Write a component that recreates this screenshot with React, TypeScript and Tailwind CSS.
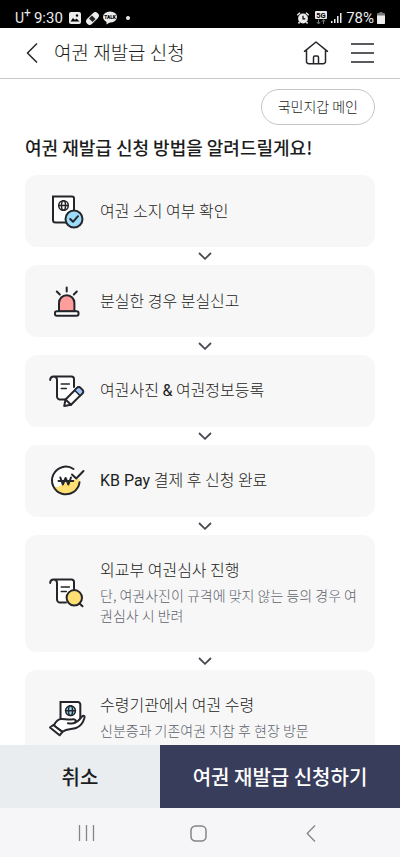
import type { ReactNode } from 'react'

type Step = {
  icon: ReactNode
  title: ReactNode
  desc?: string
}

const ink = '#25262b'

function StepIcon({ children }: { children: ReactNode }) {
  return (
    <svg className="overflow-visible" width="36" height="36" viewBox="0 0 36 36" fill="none" stroke={ink} strokeWidth="2" strokeLinecap="round" strokeLinejoin="round" aria-hidden="true">
      {children}
    </svg>
  )
}

function PassportCheckIcon() {
  return (
    <StepIcon>
      <path d="M4 3.500h19a2 2 0 0 1 2 2v24H6.500A2.500 2.500 0 0 1 4 27z" fill="#fff" strokeLinejoin="miter" />
      <g strokeWidth="1.500">
        <circle cx="14.500" cy="12.500" r="4.800" />
        <ellipse cx="14.500" cy="12.500" rx="2" ry="4.800" />
        <path d="M9.700 12.500h9.600" />
      </g>
      <circle cx="25" cy="26" r="8.500" fill="#9cdcfa" />
      <path d="M21.200 26l2.800 2.800 5-5.600" />
    </StepIcon>
  )
}

function SirenIcon() {
  return (
    <StepIcon>
      <path d="M10 28.500V20a7.700 7.700 0 0 1 15.400 0v8.500z" fill="#ff9d9b" />
      <rect x="6" y="28.200" width="23.500" height="4.600" rx="1.800" fill="#fff" />
      <path d="M17.700 4.500v4M7.800 8.500l3 3M27.800 8.500l-3 3" />
    </StepIcon>
  )
}

function ScrollPaper() {
  return (
    <>
      <path d="M4.500 3.500h18A2.500 2.500 0 0 1 25 6v20.500H11.500a3.500 3.500 0 0 1-3.500-3.500V7a3.500 3.500 0 0 0-3.500-3.500z" fill="#fff" stroke="none" />
      <path d="M1.200 7C1.200 4.500 2.500 3.500 4.500 3.500h18A2.500 2.500 0 0 1 25 6v8M4.500 3.500C6.800 3.500 8 4.800 8 7v16.500a3 3 0 0 0 3 3h6" />
      <path d="M12.300 11h8M12.300 15.500h5" strokeWidth="1.600" />
    </>
  )
}

function PencilPaperIcon() {
  return (
    <StepIcon>
      <ScrollPaper />
      <path d="M16.500 26.500 28 15a2.500 2.500 0 0 1 3.500 0l1.900 1.900a2.500 2.500 0 0 1 0 3.500L22 31.800l-6.800 1.300z" fill="#fff" />
      <path d="M25.700 17.300 28 15a2.500 2.500 0 0 1 3.500 0l1.900 1.900a2.500 2.500 0 0 1 0 3.500l-2.300 2.300z" fill="#9cc4fb" strokeWidth="1.600" />
      <path d="M16.500 26.500l5.500 5.300" />
    </StepIcon>
  )
}

function WonIcon() {
  return (
    <StepIcon>
      <circle cx="16.800" cy="17.500" r="13.800" fill="#fff" stroke="none" />
      <path d="M4.500 23.700C10 25.500 13.500 20.500 18 19s8-2 12.500-3.500C32 23.500 26 31.300 16.800 31.300c-5.300 0-10-3-12.300-7.600z" fill="#ffdf73" stroke="none" />
      <path d="M24.500 6A13.800 13.800 0 1 0 30.500 19.300" />
      <path d="M23 11.500l4.200 4L34.500 8" />
      <path d="M11.300 14.500l2.500 7 2.800-6.500 2.800 6.500 2.600-7M9.500 18h14.800" />
    </StepIcon>
  )
}

function SearchPaperIcon() {
  return (
    <StepIcon>
      <ScrollPaper />
      <circle cx="25.300" cy="21.800" r="7.700" fill="#ffdf73" />
      <path d="M30.500 27.500l3 2.800" />
    </StepIcon>
  )
}

function HandPassportIcon() {
  return (
    <StepIcon>
      <path d="M11.500 1h17.300A2.500 2.500 0 0 1 31.300 3.500V21H11.500z" fill="#fff" strokeLinejoin="miter" />
      <g strokeWidth="1.500">
        <circle cx="21.500" cy="9.700" r="4.900" fill="#9cdcfa" />
        <ellipse cx="21.500" cy="9.700" rx="2" ry="4.900" />
        <path d="M16.600 9.700h9.800" />
      </g>
      <path d="M4.800 24.500C6.500 21 9 18 12.500 18c4 0 6.500.8 11.500.2 2.800-.2 3.300 2 2.200 3.300 3.300-.8 4.800-3.500 7-6.200 1.300-1.300 2.800-.3 2.300 1.500-1.300 4.800-4.300 8.700-8.500 10.200-4.500 1.600-9 .5-13.500 3.800z" fill="#fff" />
      <path d="M26.200 21.500c-1.700 1.500-4.500 1.200-7.200.8" />
      <path d="M1 26.500l3.300-2.500 9 7-2.700 3.300z" fill="#fff" />
    </StepIcon>
  )
}

function Latin({ children }: { children: ReactNode }) {
  return <span className="font-[Roboto,sans-serif] font-normal">{children}</span>
}

const steps: Step[] = [
  { icon: <PassportCheckIcon />, title: '여권 소지 여부 확인' },
  { icon: <SirenIcon />, title: '분실한 경우 분실신고' },
  { icon: <PencilPaperIcon />, title: <>여권사진 <Latin>&amp;</Latin> 여권정보등록</> },
  { icon: <WonIcon />, title: <><Latin>KB Pay</Latin> 결제 후 신청 완료</> },
  {
    icon: <SearchPaperIcon />,
    title: '외교부 여권심사 진행',
    desc: '단, 여권사진이 규격에 맞지 않는 등의 경우 여권심사 시 반려',
  },
  {
    icon: <HandPassportIcon />,
    title: '수령기관에서 여권 수령',
    desc: '신분증과 기존여권 지참 후 현장 방문',
  },
]

function StatusBar() {
  return (
    <div className="flex h-7 shrink-0 items-end justify-between bg-black px-[15px] font-[Roboto,sans-serif] text-[#ececec]">
      <div className="flex h-5 items-center">
        <span className="text-sm leading-5">U<sup className="text-xs">+</sup></span>
        <span className="ml-[3px] text-[15px] leading-5">9:30</span>
        <svg className="ml-1.5" width="12" height="12" viewBox="0 0 12 12">
          <rect width="12" height="12" rx="2" fill="#ececec" />
          <path d="M1.500 9.500l2.500-3.500 2 2 1.500-1.500 3 3z" fill="#000" />
          <circle cx="8" cy="3.500" r="1.200" fill="#000" />
        </svg>
        <svg className="ml-[5px]" width="13" height="13" viewBox="0 0 13 13">
          <rect x="-1" y="3" width="15" height="7" rx="3.500" transform="rotate(-45 6.500 6.500)" fill="#ececec" />
          <path d="M6 3.500l3.500 3.500-3 3L3 6.500z" fill="#222" />
        </svg>
        <svg className="ml-1" width="14" height="14" viewBox="0 0 14 14">
          <ellipse cx="7" cy="6" rx="7" ry="5.600" fill="#ececec" />
          <path d="M3.500 9.500v4l4-2.500z" fill="#ececec" />
          <text x="7" y="7.800" fontSize="4.800" fontWeight="900" textAnchor="middle" fill="#000">TALK</text>
        </svg>
        <span className="ml-[9px] size-1 rounded-full bg-[#ececec]" />
      </div>
      <div className="flex h-5 items-center">
        <svg width="12" height="12" viewBox="0 0 12 12" fill="#ececec">
          <circle cx="6" cy="6.500" r="4.900" />
          <path d="M.3 3.200 3 .7M11.700 3.200 9 .7M2.500 10l-1 1.500M9.500 10l1 1.500" stroke="#ececec" strokeWidth="1.500" />
          <path d="M6 3.800v3h2.300" stroke="#000" strokeWidth="1.200" fill="none" />
        </svg>
        <svg className="ml-[5px]" width="14" height="14" viewBox="0 0 14 14">
          <rect x="1" width="12" height="8" rx="1" fill="#ececec" />
          <text x="7" y="6.800" fontSize="7.500" fontWeight="700" textAnchor="middle" fill="#000">5G</text>
          <path d="M4.500 8.500v4M2.800 11l1.700 2 1.700-2M9.500 13V9M7.800 10.700l1.700-2 1.700 2" stroke="#777" fill="none" />
        </svg>
        <svg className="ml-[3px]" width="11" height="12" viewBox="0 0 11 12" fill="#ececec">
          <rect y="9" width="1.500" height="2" />
          <rect x="3" y="7" width="1.500" height="4" />
          <rect x="6" y="4" width="1.500" height="7" />
          <rect x="9" y="1" width="1.500" height="10" />
        </svg>
        <span className="ml-1 text-[15px] leading-5">78%</span>
        <svg className="ml-[3px]" width="8" height="12" viewBox="0 0 8 12">
          <path d="M2.500 0h3v1H7a1 1 0 0 1 1 1v9a1 1 0 0 1-1 1H1a1 1 0 0 1-1-1V2a1 1 0 0 1 1-1h1.500z" fill="#777" />
          <path d="M0 3.500h8V11a1 1 0 0 1-1 1H1a1 1 0 0 1-1-1z" fill="#ececec" />
        </svg>
      </div>
    </div>
  )
}

function Header() {
  return (
    <header className="flex h-[51px] shrink-0 items-center border-b border-[#c9c9c9] px-[26px]">
      <button type="button" aria-label="뒤로">
        <svg width="12" height="20" viewBox="0 0 12 20" fill="none" stroke={ink} strokeWidth="1.500">
          <path d="M11 .5 1.500 10l9.500 9.500" />
        </svg>
      </button>
      <h1 className="ml-4 pb-[2px] text-[19px] leading-7 font-light">여권 재발급 신청</h1>
      <button type="button" aria-label="홈" className="ml-auto">
        <svg width="26" height="24" viewBox="0 0 26 24" fill="none" stroke={ink} strokeWidth="1.500" strokeLinecap="round" strokeLinejoin="round">
          <path d="M1.500 10.300 13 1l11.500 9.300M3.500 9v11.500A2.200 2.200 0 0 0 5.700 22.700h14.600a2.200 2.200 0 0 0 2.200-2.200V9M10.500 22.700v-6.500a1.300 1.300 0 0 1 1.300-1.300h2.400a1.300 1.300 0 0 1 1.300 1.300v6.500" />
        </svg>
      </button>
      <button type="button" aria-label="메뉴" className="ml-[22px]">
        <svg width="23" height="20" viewBox="0 0 23 20" stroke={ink} strokeWidth="1.500">
          <path d="M0 1h23M0 10h23M0 19h23" />
        </svg>
      </button>
    </header>
  )
}

function StepCard({ icon, title, desc }: Step) {
  return (
    <div className="flex min-h-[72px] items-center rounded-xl bg-[#f7f7f7] py-[22px] pr-4 pl-6">
      <div className="-my-1 shrink-0">{icon}</div>
      <div className={`ml-[15px] ${desc ? 'pb-[5px]' : 'pb-[2px]'}`}>
        <p className="text-base leading-6 font-light">{title}</p>
        {desc && <p className="mt-1 text-sm leading-5 font-light text-[#60636d]">{desc}</p>}
      </div>
    </div>
  )
}

export default function App() {
  return (
    <div className="flex h-screen flex-col bg-white font-['Noto_Sans_CJK_KR',sans-serif] text-[#1c1d21]">
      <StatusBar />
      <Header />
      <main className="flex-1 overflow-y-auto px-[25px] pt-[10px] [scrollbar-width:none]">
        <div className="flex justify-end">
          <button type="button" className="h-9 rounded-full border border-[#c4c4c8] px-4 pb-[2px] text-sm font-light">
            국민지갑 메인
          </button>
        </div>
        <h2 className="mt-2 text-lg leading-7 font-medium">여권 재발급 신청 방법을 알려드릴게요!</h2>
        <ol className="mt-[14px]">
          {steps.map((step, i) => (
            <li key={i}>
              {i > 0 && (
                <div className="flex h-[18px] items-center justify-center pl-[9px]">
                  <svg width="14" height="8" viewBox="0 0 14 8" fill="none" stroke="#4a4b52" strokeWidth="1.800">
                    <path d="M1 1l6 5.800L13 1" />
                  </svg>
                </div>
              )}
              <StepCard {...step} />
            </li>
          ))}
        </ol>
      </main>
      <div className="flex h-[63px] shrink-0 text-xl font-medium">
        <button type="button" className="w-2/5 bg-[#e9edf0]">취소</button>
        <button type="button" className="w-3/5 bg-[#383d5c] text-white">여권 재발급 신청하기</button>
      </div>
      <nav className="flex h-[49px] shrink-0 items-center bg-[#f6f6f8] pt-px pr-[84px] pl-[78px] text-[#858585]">
        <button type="button" aria-label="최근 앱">
          <svg width="17" height="16" viewBox="0 0 17 16" stroke="currentColor" strokeWidth="1.300">
            <path d="M1.500 0v16M8.500 0v16M15.500 0v16" />
          </svg>
        </button>
        <div className="flex flex-1 justify-center pr-[5px]">
          <button type="button" aria-label="홈 화면">
            <svg width="17" height="17" viewBox="0 0 17 17" fill="none" stroke="currentColor" strokeWidth="1.500">
              <rect x="1" y="1" width="15" height="15" rx="4.500" />
            </svg>
          </button>
        </div>
        <button type="button" aria-label="이전">
          <svg width="10" height="17" viewBox="0 0 10 17" fill="none" stroke="currentColor" strokeWidth="1.300">
            <path d="M9 .5 1.200 8.500 9 16.500" />
          </svg>
        </button>
      </nav>
    </div>
  )
}
